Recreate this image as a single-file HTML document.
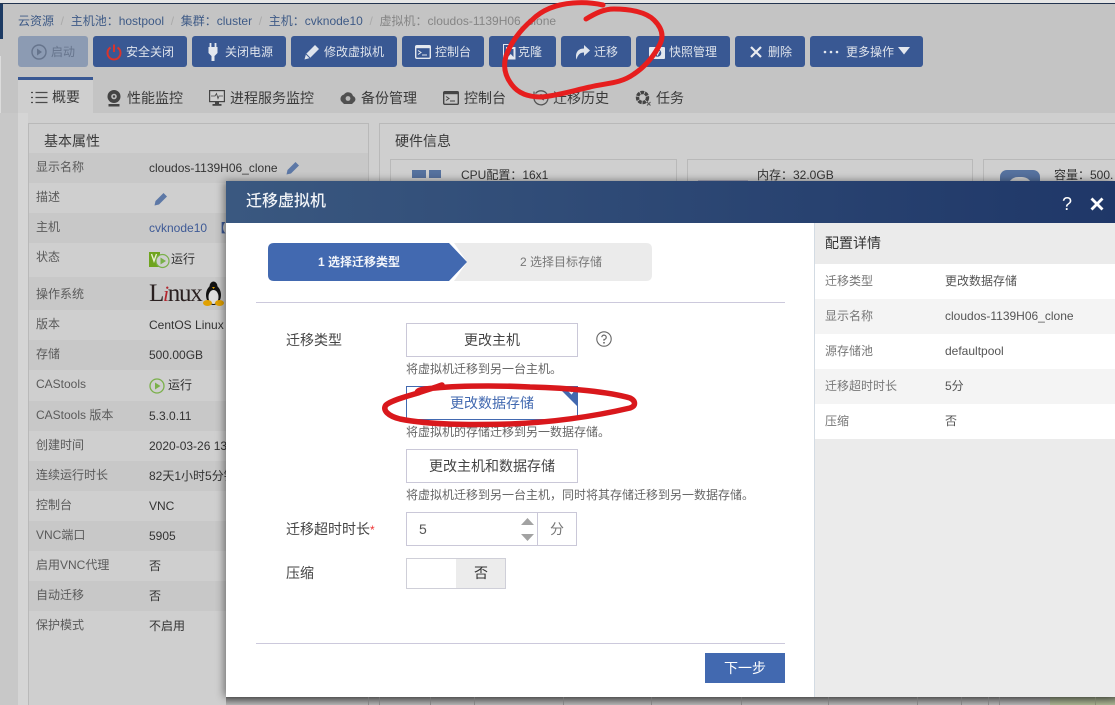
<!DOCTYPE html>
<html><head><meta charset="utf-8"><style>
html,body{margin:0;padding:0;width:1115px;height:705px;overflow:hidden}
#p{width:1115px;height:705px;overflow:hidden;position:relative;background:#c4c4c4;font-family:"Liberation Sans","Noto Sans CJK SC",sans-serif;font-size:12px;color:#333}
.a{position:absolute}
.t{position:absolute;white-space:nowrap;height:20px;line-height:20px}
.b{position:absolute;top:36px;height:31px;background:#395893;border-radius:3px}
.w{color:#dfe4ec}
.tab{font-size:14px;color:#3a3a3a}
.r{position:absolute;left:29px;width:339px;background:#cfcfcf}
.d{background:#c8c8c8}
.l{color:#5a5a5a}
.v{color:#333}
.box{position:absolute;left:406px;width:170px;height:32px;border:1px solid #cac8d8;background:#fff;text-align:center;line-height:32px;font-size:14px;color:#444}
.h{color:#666}
.pr{position:absolute;left:815px;width:300px;height:35px}
.g{color:#777}
.vv{color:#555}
svg{position:absolute;overflow:visible}
</style></head><body><div id="p">
<div class="a" style="left:0;top:0;width:1115px;height:3px;background:#e6e6e6"></div>
<div class="a" style="left:0;top:3px;width:1115px;height:1px;background:#22344f"></div>
<div class="a" style="left:0;top:4px;width:3px;height:35px;background:#1c3a63"></div>
<div class="a" style="left:0;top:56px;width:1px;height:400px;background:#dcdcdc"></div>

<div class="t" style="left:18px;top:11px;color:#3e5a86">云资源 <span style="color:#aaa">&nbsp;/&nbsp;</span> 主机池：hostpool <span style="color:#aaa">&nbsp;/&nbsp;</span> 集群：cluster <span style="color:#aaa">&nbsp;/&nbsp;</span> 主机：cvknode10 <span style="color:#aaa">&nbsp;/&nbsp;</span> <span style="color:#858585">虚拟机：cloudos-1139H06_clone</span></div>

<div class="b" style="left:18px;width:70px;background:#8c9bb3"></div>
<svg style="left:31px;top:44px" width="16" height="16"><circle cx="8" cy="8" r="7" fill="none" stroke="#66748c" stroke-width="1.4"/><path d="M6 4.5L11 8L6 11.5Z" fill="#66748c"/></svg>
<div class="t" style="left:51px;top:42px;color:#66748c">启动</div>

<div class="b" style="left:93px;width:94px"></div>
<svg style="left:106px;top:44px" width="16" height="17"><path d="M4.5 3.5A6.5 6.5 0 1 0 11.5 3.500" fill="none" stroke="#d9342c" stroke-width="2"/><path d="M8 0.500V8" stroke="#d9342c" stroke-width="2"/></svg>
<div class="t w" style="left:126px;top:42px">安全关闭</div>

<div class="b" style="left:192px;width:94px"></div>
<svg style="left:208px;top:43px" width="10" height="18"><path d="M2.500 0V4M7.500 0V4" stroke="#e4e8ef" stroke-width="1.800"/><path d="M0.500 4H9.500V10L6.500 13V18H3.500V13L0.500 10Z" fill="#e4e8ef"/></svg>
<div class="t w" style="left:225px;top:42px">关闭电源</div>

<div class="b" style="left:291px;width:106px"></div>
<svg style="left:304px;top:44px" width="16" height="16"><path d="M0.500 15.500L2 10L11 1L15 5L6 14Z" fill="#dfe4ec"/><path d="M2 10L6 14" stroke="#395893"/></svg>
<div class="t w" style="left:324px;top:42px">修改虚拟机</div>

<div class="b" style="left:402px;width:82px"></div>
<svg style="left:415px;top:45px" width="16" height="14"><rect x="0.700" y="0.700" width="14.600" height="12.600" rx="1" fill="none" stroke="#e4e8ef" stroke-width="1.400"/><rect x="0.700" y="0.700" width="14.600" height="2.500" fill="#e4e8ef"/><path d="M3 5.500L6 7.500L3 9.500M7 10H12" stroke="#e4e8ef" fill="none"/></svg>
<div class="t w" style="left:435px;top:42px">控制台</div>

<div class="b" style="left:489px;width:67px"></div>
<svg style="left:503px;top:44px" width="13" height="16"><path d="M0.500 15V0.500H11" fill="none" stroke="#e4e8ef"/><rect x="3" y="3" width="9.500" height="12.500" fill="#e4e8ef"/><path d="M5 5V13L7.700 10L10.500 13V5" fill="#395893"/></svg>
<div class="t w" style="left:518px;top:42px">克隆</div>

<div class="b" style="left:561px;width:70px"></div>
<svg style="left:575px;top:45px" width="15" height="15"><path d="M9 0L15 5.500L9 11V7.500C5 7.500 3 9.500 1.500 14.500C0 9 2 3.500 9 3.500Z" fill="#dfe4ec"/></svg>
<div class="t w" style="left:594px;top:42px">迁移</div>

<div class="b" style="left:636px;width:94px"></div>
<svg style="left:649px;top:45px" width="16" height="14"><rect x="0" y="2" width="16" height="12" rx="1" fill="#e4e8ef"/><circle cx="8.500" cy="8" r="3.800" fill="#395893"/><path d="M6.500 6L8.500 10L10.500 6" stroke="#e4e8ef" fill="none"/></svg>
<div class="t w" style="left:669px;top:42px">快照管理</div>

<div class="b" style="left:735px;width:70px"></div>
<svg style="left:750px;top:46px" width="12" height="12"><path d="M1 1L11 11M11 1L1 11" stroke="#e8ebf1" stroke-width="2.200"/></svg>
<div class="t w" style="left:768px;top:42px">删除</div>

<div class="b" style="left:810px;width:113px"></div>
<svg style="left:823px;top:50px" width="16" height="4"><circle cx="2" cy="2" r="1.300" fill="#e4e8ef"/><circle cx="8" cy="2" r="1.300" fill="#e4e8ef"/><circle cx="14" cy="2" r="1.300" fill="#e4e8ef"/></svg>
<div class="t w" style="left:846px;top:42px">更多操作</div>
<svg style="left:898px;top:47px" width="12" height="8"><path d="M0 0H12L6 7.500Z" fill="#e4e8ef"/></svg>

<!-- content background -->
<div class="a" style="left:0;top:113px;width:1115px;height:592px;background:#cfcfcf"></div>
<div class="a" style="left:0;top:113px;width:18px;height:592px;background:#c8c8c8"></div>
<div class="a" style="left:18px;top:113px;width:10px;height:592px;background:#d5d5d5"></div>
<div class="a" style="left:18px;top:77px;width:75px;height:36px;background:#cfcfcf;border-top:3px solid #395893;box-sizing:border-box"></div>

<svg style="left:31px;top:91px" width="17" height="13"><path d="M0 1.500H2M4.500 1.500H16.500M0 6.500H2M4.500 6.500H16.500M0 11.500H2M4.500 11.500H16.500" stroke="#4a4a4a" stroke-width="1.200"/></svg>
<div class="t tab" style="left:52px;top:87px">概要</div>
<svg style="left:107px;top:90px" width="14" height="17"><circle cx="7" cy="6.500" r="6.500" fill="#444"/><circle cx="7" cy="6.500" r="2.800" fill="#bbb"/><circle cx="7" cy="6.500" r="1.200" fill="#444"/><rect x="1.500" y="14" width="11" height="2.500" fill="#444"/></svg>
<div class="t tab" style="left:127px;top:88px">性能监控</div>
<svg style="left:209px;top:90px" width="16" height="16"><rect x="0.600" y="0.600" width="14.800" height="11" fill="#d0d0d0" stroke="#444" stroke-width="1.200"/><path d="M2 6H6L7.500 3.500L9 8.500L10 6H14" stroke="#444" fill="none" stroke-width=".8"/><rect x="6" y="12" width="4" height="2.500" fill="#444"/><rect x="3.500" y="14" width="9" height="1.800" fill="#444"/></svg>
<div class="t tab" style="left:230px;top:88px">进程服务监控</div>
<svg style="left:340px;top:92px" width="16" height="13"><path d="M1 9A4.500 4.500 0 0 1 4 2.500A5 5 0 0 1 13 4A3.500 3.500 0 0 1 15 9L12 12H4Z" fill="#505050"/><circle cx="8" cy="6.500" r="2.400" fill="#b9b9b9"/></svg>
<div class="t tab" style="left:361px;top:88px">备份管理</div>
<svg style="left:443px;top:91px" width="16" height="14"><rect x="0.700" y="0.700" width="14.600" height="12.600" rx="1" fill="none" stroke="#444" stroke-width="1.400"/><rect x="0.700" y="0.700" width="14.600" height="2.500" fill="#444"/><path d="M3 5.500L6 7.500L3 9.500M7 10H12" stroke="#444" fill="none"/></svg>
<div class="t tab" style="left:464px;top:88px">控制台</div>
<svg style="left:533px;top:90px" width="16" height="16"><path d="M2.500 3.500A7 7 0 1 1 1 8" fill="none" stroke="#555" stroke-width="1.300"/><path d="M1 1.500V5H4.500M8 4V8.500L11 10" fill="none" stroke="#555" stroke-width="1.200"/></svg>
<div class="t tab" style="left:553px;top:88px">迁移历史</div>
<svg style="left:635px;top:90px" width="16" height="16"><circle cx="7.500" cy="7.500" r="5" fill="none" stroke="#444" stroke-width="3.400" stroke-dasharray="3.500 .8"/><path d="M12 12L15.500 15.500M15.500 12L12 15.500" stroke="#555"/></svg>
<div class="t tab" style="left:656px;top:88px">任务</div>

<!-- left panel -->
<div class="a" style="left:28px;top:123px;width:341px;height:582px;border:1px solid #b9b9b9;border-bottom:0;box-sizing:border-box"></div>
<div class="t" style="left:44px;top:131px;font-size:14px;color:#3a3a3a">基本属性</div>
<div class="r d" style="top:153px;height:30px"></div>
<div class="r d" style="top:213px;height:30px"></div>
<div class="r d" style="top:277px;height:33px"></div>
<div class="r d" style="top:340px;height:30px"></div>
<div class="r d" style="top:401px;height:30px"></div>
<div class="r d" style="top:461px;height:30px"></div>
<div class="r d" style="top:521px;height:30px"></div>
<div class="r d" style="top:581px;height:30px"></div>

<div class="t l" style="left:36px;top:157px">显示名称</div><div class="t v" style="left:149px;top:158px">cloudos-1139H06_clone</div>
<svg style="left:286px;top:161px" width="14" height="14"><path d="M0.500 13.500L1.500 9L9.500 1L13 4.500L5 12.500Z" fill="#5d78a6"/></svg>
<div class="t l" style="left:36px;top:187px">描述</div>
<svg style="left:154px;top:192px" width="14" height="14"><path d="M0.500 13.500L1.500 9L9.500 1L13 4.500L5 12.500Z" fill="#5d78a6"/></svg>
<div class="t l" style="left:36px;top:217px">主机</div><div class="t" style="left:149px;top:218px;color:#3e5a96">cvknode10 <b>&nbsp;【</b></div>
<div class="t l" style="left:36px;top:247px">状态</div>
<svg style="left:149px;top:252px" width="21" height="17"><rect x="0" y="0" width="11" height="15" fill="#6fa41e"/><path d="M2.500 2L5 9L7.500 2" stroke="#e8f0d0" stroke-width="1.400" fill="none"/><circle cx="13.500" cy="9" r="6.500" fill="#cfcfcf" stroke="#7ab04a" stroke-width="1.200"/><path d="M11.500 5.500L17 9L11.500 12.500Z" fill="#7ab04a"/></svg>
<div class="t v" style="left:171px;top:249px">运行</div>
<div class="t l" style="left:36px;top:284px">操作系统</div>
<div class="t" style="left:149px;top:284px;font-family:'Liberation Serif',serif;font-size:25px;color:#2a2020;letter-spacing:-1.300px">L<i style="color:#b3262e;font-size:22px">i</i>nux</div>
<svg style="left:203px;top:281px" width="21" height="26"><ellipse cx="10.500" cy="14" rx="7.500" ry="10" fill="#111"/><ellipse cx="10.500" cy="5.500" rx="4" ry="5" fill="#111"/><ellipse cx="10.500" cy="16" rx="5" ry="7" fill="#ddd"/><path d="M9 6H12L10.500 8Z" fill="#e0a000"/><ellipse cx="4.500" cy="22" rx="4.500" ry="3" fill="#e0a000"/><ellipse cx="16.500" cy="22" rx="4.500" ry="3" fill="#e0a000"/></svg>
<div class="t l" style="left:36px;top:314px">版本</div><div class="t v" style="left:149px;top:315px">CentOS Linux</div>
<div class="t l" style="left:36px;top:344px">存储</div><div class="t v" style="left:149px;top:345px">500.00GB</div>
<div class="t l" style="left:36px;top:374px">CAStools</div>
<svg style="left:149px;top:378px" width="16" height="16"><circle cx="8" cy="8" r="7" fill="none" stroke="#7ab04a" stroke-width="1.300"/><path d="M6 4.500L11.500 8L6 11.500Z" fill="#7ab04a"/></svg>
<div class="t v" style="left:168px;top:375px">运行</div>
<div class="t l" style="left:36px;top:405px">CAStools 版本</div><div class="t v" style="left:149px;top:406px">5.3.0.11</div>
<div class="t l" style="left:36px;top:435px">创建时间</div><div class="t v" style="left:149px;top:436px">2020-03-26 13</div>
<div class="t l" style="left:36px;top:465px">连续运行时长</div><div class="t v" style="left:149px;top:466px">82天1小时5分钟</div>
<div class="t l" style="left:36px;top:495px">控制台</div><div class="t v" style="left:149px;top:496px">VNC</div>
<div class="t l" style="left:36px;top:525px">VNC端口</div><div class="t v" style="left:149px;top:526px">5905</div>
<div class="t l" style="left:36px;top:555px">启用VNC代理</div><div class="t v" style="left:149px;top:556px">否</div>
<div class="t l" style="left:36px;top:585px">自动迁移</div><div class="t v" style="left:149px;top:586px">否</div>
<div class="t l" style="left:36px;top:615px">保护模式</div><div class="t v" style="left:149px;top:616px">不启用</div>

<!-- right panel -->
<div class="a" style="left:379px;top:123px;width:736px;height:582px;border-left:1px solid #b9b9b9;border-top:1px solid #b9b9b9;box-sizing:border-box"></div>
<div class="t" style="left:395px;top:131px;font-size:14px;color:#3a3a3a">硬件信息</div>
<div class="a" style="left:390px;top:159px;width:287px;height:40px;border:1px solid #b9b9b9;box-sizing:border-box"></div>
<div class="a" style="left:687px;top:159px;width:286px;height:40px;border:1px solid #b9b9b9;box-sizing:border-box"></div>
<div class="a" style="left:983px;top:159px;width:132px;height:40px;border:1px solid #b9b9b9;border-right:0;box-sizing:border-box"></div>
<div class="a" style="left:412px;top:170px;width:14px;height:8px;background:#56729f"></div>
<div class="a" style="left:429px;top:170px;width:12px;height:8px;background:#56729f"></div>
<div class="t" style="left:461px;top:165px">CPU配置：16x1</div>
<div class="a" style="left:698px;top:180px;width:50px;height:1px;background:#aab"></div>
<div class="t" style="left:757px;top:165px">内存：32.0GB</div>
<div class="a" style="left:1000px;top:170px;width:40px;height:20px;background:#56729f;border-radius:7px 7px 0 0"></div>
<div class="a" style="left:1008px;top:177px;width:24px;height:10px;background:#cfcfcf;border-radius:12px 12px 0 0"></div>
<div class="t" style="left:1054px;top:165px">容量：500.</div>

<!-- bottom strip -->
<div class="a" style="left:226px;top:697px;width:889px;height:8px;background:linear-gradient(#6f6f6f,#b4b4b4)"></div>
<div class="a" style="left:1050px;top:697px;width:65px;height:8px;background:linear-gradient(#6f7562,#a9b391)"></div>
<div class="a" style="left:368px;top:697px;width:1px;height:8px;background:#8a8a8a"></div>
<div class="a" style="left:379px;top:697px;width:1px;height:8px;background:#8a8a8a"></div>
<div class="a" style="left:430px;top:697px;width:1px;height:8px;background:#8a8a8a"></div>
<div class="a" style="left:474px;top:697px;width:1px;height:8px;background:#8a8a8a"></div>
<div class="a" style="left:563px;top:697px;width:1px;height:8px;background:#8a8a8a"></div>
<div class="a" style="left:651px;top:697px;width:1px;height:8px;background:#8a8a8a"></div>
<div class="a" style="left:741px;top:697px;width:1px;height:8px;background:#8a8a8a"></div>
<div class="a" style="left:828px;top:697px;width:1px;height:8px;background:#8a8a8a"></div>
<div class="a" style="left:917px;top:697px;width:1px;height:8px;background:#8a8a8a"></div>
<div class="a" style="left:961px;top:697px;width:1px;height:8px;background:#8a8a8a"></div>
<div class="a" style="left:988px;top:697px;width:1px;height:8px;background:#8a8a8a"></div>
<div class="a" style="left:999px;top:697px;width:1px;height:8px;background:#8a8a8a"></div>
<div class="a" style="left:1095px;top:697px;width:1px;height:8px;background:#8a9078"></div>

<!-- modal -->
<div class="a" style="left:226px;top:181px;width:889px;height:516px;background:#fff;box-shadow:-2px 0 8px rgba(0,0,0,.45)"></div>
<div class="a" style="left:226px;top:181px;width:889px;height:42px;background:linear-gradient(90deg,#3a5880,#1f3768)"></div>
<div class="t" style="left:246px;top:192px;font-size:16px;color:#f0f3f7;font-weight:500">迁移虚拟机</div>
<div class="t" style="left:1062px;top:194px;font-size:18px;color:#fff">?</div>
<svg style="left:1090px;top:197px" width="14" height="14"><path d="M1.500 1.500L12.500 12.500M12.500 1.500L1.500 12.500" stroke="#fff" stroke-width="2.800"/></svg>

<svg style="left:268px;top:243px" width="384" height="38"><path d="M186 0H378Q384 0 384 6V32Q384 38 378 38H186L199 19Z" fill="#ebebeb"/><path d="M6 0H181L199 19L181 38H6Q0 38 0 32V6Q0 0 6 0Z" fill="#4269b0"/></svg>
<div class="t" style="left:318px;top:252px;color:#f2f5fa;font-weight:bold">1 选择迁移类型</div>
<div class="t" style="left:520px;top:252px;color:#777">2 选择目标存储</div>
<div class="a" style="left:256px;top:302px;width:529px;height:1px;background:#ccc9dc"></div>

<div class="t" style="left:286px;top:330px;font-size:14px;color:#444">迁移类型</div>
<div class="box" style="top:323px">更改主机</div>
<svg style="left:596px;top:331px" width="16" height="16"><circle cx="8" cy="8" r="7.200" fill="none" stroke="#666" stroke-width="1.100"/><path d="M5.800 6.200A2.200 2.200 0 1 1 8 8.500V9.800" fill="none" stroke="#666" stroke-width="1.200"/><circle cx="8" cy="11.800" r=".9" fill="#666"/></svg>
<div class="t h" style="left:406px;top:359px">将虚拟机迁移到另一台主机。</div>
<div class="box" style="top:386px;border-color:#4269b0;color:#4269b0">更改数据存储</div>
<svg style="left:558px;top:387px" width="20" height="20"><path d="M0 0H19V19Z" fill="#4269b0"/><path d="M11 4L13.500 6.500L16 3" stroke="#fff" fill="none" stroke-width="1.500"/></svg>
<div class="t h" style="left:406px;top:422px">将虚拟机的存储迁移到另一数据存储。</div>
<div class="box" style="top:449px">更改主机和数据存储</div>
<div class="t h" style="left:406px;top:485px">将虚拟机迁移到另一台主机，同时将其存储迁移到另一数据存储。</div>

<div class="t" style="left:286px;top:519px;font-size:14px;color:#444">迁移超时时长<span style="color:#e33;font-size:12px">*</span></div>
<div class="a" style="left:406px;top:512px;width:169px;height:32px;border:1px solid #cac8d8"></div>
<div class="a" style="left:537px;top:513px;width:1px;height:32px;background:#cac8d8"></div>
<div class="t" style="left:419px;top:519px;font-size:14px;color:#555">5</div>
<svg style="left:521px;top:518px" width="13" height="23"><path d="M6.500 0L13 7H0Z" fill="#a2a2a2"/><path d="M0 16H13L6.500 23Z" fill="#a2a2a2"/></svg>
<div class="t" style="left:550px;top:519px;font-size:14px;color:#777">分</div>

<div class="t" style="left:286px;top:563px;font-size:14px;color:#444">压缩</div>
<div class="a" style="left:406px;top:558px;width:98px;height:29px;border:1px solid #cfcfd8"></div>
<div class="a" style="left:456px;top:559px;width:49px;height:29px;background:#ececec"></div>
<div class="t" style="left:474px;top:563px;font-size:14px;color:#333">否</div>

<div class="a" style="left:256px;top:643px;width:529px;height:1px;background:#ccc9dc"></div>
<div class="a" style="left:705px;top:653px;width:80px;height:30px;background:#4269b0;color:#fff;text-align:center;line-height:30px;font-size:14px">下一步</div>

<!-- config panel -->
<div class="a" style="left:814px;top:223px;width:301px;height:474px;background:#ebebeb;border-left:1px solid #d3dbe3;box-sizing:border-box"></div>
<div class="t" style="left:825px;top:233px;font-size:14px;color:#333">配置详情</div>
<div class="pr" style="top:264px;background:#fff"></div>
<div class="pr" style="top:299px;background:#f4f4f4"></div>
<div class="pr" style="top:334px;background:#fff"></div>
<div class="pr" style="top:369px;background:#f4f4f4"></div>
<div class="pr" style="top:404px;background:#fff"></div>
<div class="t g" style="left:825px;top:271px">迁移类型</div><div class="t vv" style="left:945px;top:271px">更改数据存储</div>
<div class="t g" style="left:825px;top:306px">显示名称</div><div class="t vv" style="left:945px;top:306px">cloudos-1139H06_clone</div>
<div class="t g" style="left:825px;top:341px">源存储池</div><div class="t vv" style="left:945px;top:341px">defaultpool</div>
<div class="t g" style="left:825px;top:376px">迁移超时时长</div><div class="t vv" style="left:945px;top:376px">5分</div>
<div class="t g" style="left:825px;top:411px">压缩</div><div class="t vv" style="left:945px;top:411px">否</div>

<!-- red annotations -->
<svg style="left:0;top:0" width="1115" height="705">
<path d="M586 19C596 13 604 9 614 9C630 9 646 12 654 20C662 28 664 36 660 44C654 56 646 66 634 74C620 84 606 83 590 87C572 91 556 96 541 97C528 97 518 93 512 85C505 76 503 66 506 56C510 44 520 30 532 20C544 8 560 4 573 3C584 2 594 3 603 5" fill="none" stroke="#e61e1e" stroke-width="5" stroke-linecap="round" stroke-linejoin="round"/>
<path d="M418 393C408 396 392 400 386 405C382 410 388 416 400 419C430 425 470 425 510 424C560 422 600 415 630 408C636 406 636 401 630 398C610 392 570 388 530 387C490 385 450 386 425 389C418 390 416 392 418 393C426 390 434 388 442 385" fill="none" stroke="#d9181c" stroke-width="5.500" stroke-linecap="round" stroke-linejoin="round"/>
</svg>
</div></body></html>
